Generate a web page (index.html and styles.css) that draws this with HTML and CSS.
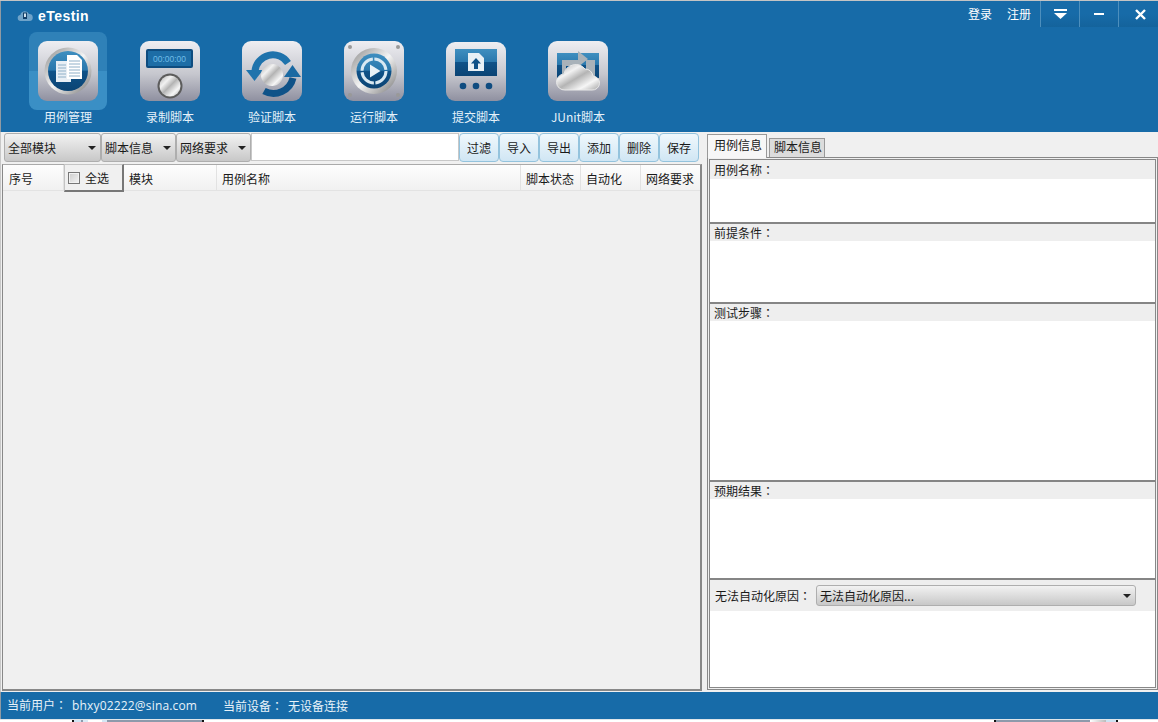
FILE: index.html
```html
<!DOCTYPE html>
<html lang="zh-CN">
<head>
<meta charset="utf-8">
<title>eTestin</title>
<link rel="stylesheet" href="styles.css">
</head>
<body>
<svg class="defs" width="0" height="0" aria-hidden="true">
  <defs>
    <linearGradient id="tile" x1="0" y1="0" x2="0" y2="1">
      <stop offset="0" stop-color="#eeeef2"/><stop offset=".55" stop-color="#c6c7ce"/><stop offset="1" stop-color="#8f90a0"/>
    </linearGradient>
    <linearGradient id="ring" x1="0" y1="0" x2="1" y2="1">
      <stop offset="0" stop-color="#8d8d8d"/><stop offset=".5" stop-color="#f4f4f4"/><stop offset="1" stop-color="#777"/>
    </linearGradient>
    <linearGradient id="blue" x1="0" y1="0" x2="0" y2="1">
      <stop offset="0" stop-color="#3f8fc0"/><stop offset=".48" stop-color="#2a78ad"/><stop offset=".5" stop-color="#0f5288"/><stop offset="1" stop-color="#0b4474"/>
    </linearGradient>
    <linearGradient id="metal" x1="0" y1="0" x2="1" y2="1">
      <stop offset="0" stop-color="#a8a8a8"/><stop offset=".3" stop-color="#f2f2f2"/><stop offset=".5" stop-color="#b4b4b4"/><stop offset=".75" stop-color="#f6f6f6"/><stop offset="1" stop-color="#a4a4a4"/>
    </linearGradient>
  </defs>
</svg>
<div class="app">
  <header class="top">
    <div class="titlebar">
      <div class="brand">
        <svg class="logo" width="16" height="12" viewBox="0 0 16 12"><path d="M4 11a3 3 0 0 1-.6-6A4.500 4.500 0 0 1 12 4a3.500 3.500 0 0 1 .5 7z" fill="#6fa3c9"/><rect x="6" y="2.500" width="4" height="6.500" fill="#123f68"/><rect x="7" y="3.500" width="2" height="3.500" fill="#cfe2ef"/></svg>
        <span class="brand-name">eTestin</span>
      </div>
      <div class="winbar">
        <span class="link">登录</span>
        <span class="link">注册</span>
        <span class="winbtn first"><svg width="13" height="10" viewBox="0 0 13 10"><rect width="13" height="2" fill="#fff"/><path d="M0 4h13L6.500 10z" fill="#fff"/></svg></span>
        <span class="winbtn"><svg width="10" height="2" viewBox="0 0 10 2"><rect width="10" height="2" fill="#fff"/></svg></span>
        <span class="winbtn last"><svg width="11" height="11" viewBox="0 0 11 11"><path d="M1 1l9 9M10 1l-9 9" stroke="#fff" stroke-width="2.400"/></svg></span>
      </div>
    </div>
    <nav class="nav">
      <div class="nav-item active">
        <svg class="tile" viewBox="0 0 60 60"><rect width="60" height="60" rx="9" fill="url(#tile)"/><circle cx="30" cy="30" r="23.500" fill="url(#ring)"/><circle cx="30" cy="30" r="20" fill="url(#blue)"/><path d="M18 20h15v21H18z" fill="#e8eff5"/><path d="M20 24h8M20 27h8M20 30h8M20 33h8M20 36h8" stroke="#8fb0c8"/><path d="M29 14h10l5 5v19H29z" fill="#fff"/><path d="M31 20h11M31 23h11M31 26h11M31 29h11M31 32h11M31 35h11" stroke="#8fb0c8"/></svg>
        <span>用例管理</span>
      </div>
      <div class="nav-item">
        <svg class="tile" viewBox="0 0 60 60"><rect width="60" height="60" rx="9" fill="url(#tile)"/><rect x="6" y="8" width="47" height="19" rx="2" fill="#0e4c7f"/><rect x="8" y="10" width="43" height="15" fill="#1d6da6"/><text x="13" y="21" class="clock" textLength="33" lengthAdjust="spacingAndGlyphs">00:00:00</text><circle cx="30" cy="45" r="12.500" fill="#5c5c5c"/><circle cx="30" cy="45" r="10.500" fill="url(#metal)"/></svg>
        <span>录制脚本</span>
      </div>
      <div class="nav-item">
        <svg class="tile" viewBox="0 0 60 60"><rect width="60" height="60" rx="9" fill="url(#tile)"/><path d="M13 30A18 18 0 0 1 46 22" fill="none" stroke="#1f73ac" stroke-width="7"/><path d="M4 29h17l-8.500 11z" fill="#1f73ac"/><path d="M51 37A20 20 0 0 1 22 50" fill="none" stroke="#0f5288" stroke-width="7"/><path d="M42 36h17l-8.500-12z" fill="#1a69a2"/><circle cx="30" cy="34" r="11" fill="url(#metal)"/></svg>
        <span>验证脚本</span>
      </div>
      <div class="nav-item">
        <svg class="tile" viewBox="0 0 60 60"><rect width="60" height="60" rx="9" fill="url(#tile)"/><circle cx="6" cy="6" r="2" fill="#999"/><circle cx="54" cy="6" r="2" fill="#999"/><circle cx="6" cy="54" r="2" fill="#999"/><circle cx="54" cy="54" r="2" fill="#999"/><circle cx="30" cy="30" r="23" fill="url(#ring)"/><circle cx="30" cy="30" r="17.500" fill="url(#blue)"/><circle cx="30" cy="30" r="12" fill="none" stroke="#d8e8f2" stroke-width="3" stroke-dasharray="17.300 1.550"/><path d="M26 23.500l10.500 6.500-10.500 6.500z" fill="#e8f1f7"/></svg>
        <span>运行脚本</span>
      </div>
      <div class="nav-item">
        <svg class="tile" viewBox="0 0 60 60"><rect y="1" width="60" height="59" rx="9" fill="url(#tile)"/><rect x="9" y="8" width="42" height="27" fill="url(#blue)"/><path d="M22 12h11l5 5v13H22z" fill="#e8f0f5"/><path d="M30 17l5 5.500h-3V28h-4v-5.500h-3z" fill="#0f5288"/><circle cx="17" cy="45" r="3.300" fill="#0f4c80"/><circle cx="30" cy="45" r="3.300" fill="#0f4c80"/><circle cx="43" cy="45" r="3.300" fill="#0f4c80"/></svg>
        <span>提交脚本</span>
      </div>
      <div class="nav-item">
        <svg class="tile" viewBox="0 0 60 60"><rect width="60" height="60" rx="9" fill="url(#tile)"/><rect x="9" y="12" width="42" height="25" fill="url(#blue)"/><path d="M14 19h16v-9l10 8-10 8v-1H18v8h-4zM38 19h9v18h-9z" fill="#a9b2b9"/><path d="M17 49a8 8 0 0 1-1-16 12 12 0 0 1 21-5 8 8 0 0 1 8 7 7 7 0 0 1-1 14z" fill="url(#metal)" stroke="#e8e8e8"/></svg>
        <span>JUnit脚本</span>
      </div>
    </nav>
  </header>
  <main class="main">
    <section class="left">
      <div class="toolbar">
        <div class="combo w97"><span>全部模块</span><i class="caret"></i></div>
        <div class="combo w75"><span>脚本信息</span><i class="caret"></i></div>
        <div class="combo w75"><span>网络要求</span><i class="caret"></i></div>
        <div class="search"></div>
        <button class="btn">过滤</button>
        <button class="btn">导入</button>
        <button class="btn">导出</button>
        <button class="btn">添加</button>
        <button class="btn">删除</button>
        <button class="btn">保存</button>
      </div>
      <div class="table">
        <div class="thead">
          <div class="th c-no">序号</div>
          <div class="th c-all"><i class="check"></i>全选</div>
          <div class="th c-mod">模块</div>
          <div class="th c-name">用例名称</div>
          <div class="th c-state">脚本状态</div>
          <div class="th c-auto">自动化</div>
          <div class="th c-net">网络要求</div>
        </div>
      </div>
    </section>
    <aside class="right">
      <div class="tabs">
        <div class="tab on">用例信息</div>
        <div class="tab">脚本信息</div>
      </div>
      <div class="panel">
        <div class="inner">
          <div class="field h-name"><div class="label">用例名称<b class="colon" lang="zh-TW">：</b></div></div>
          <div class="field h-pre"><div class="label">前提条件<b class="colon" lang="zh-TW">：</b></div></div>
          <div class="field h-steps"><div class="label">测试步骤<b class="colon" lang="zh-TW">：</b></div></div>
          <div class="field h-result"><div class="label">预期结果<b class="colon" lang="zh-TW">：</b></div></div>
          <div class="field h-reason">
            <div class="reason-row">
              <span>无法自动化原因<b class="colon" lang="zh-TW">：</b></span>
              <div class="combo reason"><span>无法自动化原因...</span><i class="caret"></i></div>
            </div>
          </div>
        </div>
      </div>
    </aside>
  </main>
  <footer class="status">
    <span class="st-user">当前用户<b class="colon" lang="zh-TW">：</b><span class="mail">bhxy02222@sina.com</span></span>
    <span>当前设备<b class="colon" lang="zh-TW">：</b><span class="device">无设备连接</span></span>
  </footer>
  <div class="desk">
    <div class="frag frag-a"><i class="tick"></i><i class="lb8"></i><i class="g2"></i><i class="lb4"></i><i class="w14"></i><i class="lb5"></i><i class="bar"></i><i class="tick"></i></div>
    <div class="frag frag-b"><i class="tick"></i><i class="bar"></i><i class="shine"></i><i class="lb10"></i><i class="tick"></i></div>
  </div>
</div>
</body>
</html>
```
FILE: styles.css
```css
* { box-sizing: border-box; }
html, body { margin: 0; padding: 0; background: #fff; }
body { width: 1158px; height: 722px; overflow: hidden; font: 12px/16px "Noto Sans CJK SC", "Liberation Sans", sans-serif; color: #1a1a1a; }
.defs { position: absolute; }
.colon { font-family: "Noto Sans CJK TC", sans-serif; font-weight: 400; }
.app { display: flex; flex-direction: column; height: 722px; border-top: 1px solid #c4c4c4; }

.top { height: 131px; flex: none; background: #176ba8; border-left: 1px solid #8f9aa3; display: flex; flex-direction: column; }
.titlebar { height: 31px; flex: none; display: flex; justify-content: space-between; align-items: flex-start; }
.brand { display: flex; align-items: center; gap: 5px; padding: 7px 0 0 16px; }
.brand-name { font: bold 14px/16px "Liberation Sans", sans-serif; letter-spacing: .45px; color: #fff; }
.winbar { display: flex; align-items: flex-start; }
.link { color: #fff; margin-right: 15px; line-height: 26px; }
.winbtn { width: 39px; height: 26px; display: flex; align-items: center; justify-content: center; border-left: 1px solid #4d8fbd; background: linear-gradient(#176ba8 50%, #14639c); }
.winbtn.first { margin-left: -8px; }
.winbtn.last { width: 40px; padding-left: 4px; }
.link + .link { margin-right: 17px; }

.nav { display: flex; padding-left: 16px; }
.nav-item { width: 102px; height: 100px; padding-top: 9px; display: flex; flex-direction: column; align-items: center; color: #e6f2fa; position: relative; }
.nav-item span { margin-top: 8px; white-space: nowrap; position: relative; }
.tile { width: 60px; height: 60px; flex: none; display: block; position: relative; }
.nav-item.active::before { content: ""; position: absolute; left: 12px; top: 0; width: 78px; height: 78px; border-radius: 8px; background: linear-gradient(#2f81b8 0 50%, #3a8fc5 50%); }
.clock { font: 9px "Liberation Sans", sans-serif; fill: #6fbce6; }

.main { flex: 1; display: flex; background: #f0f0f0; min-height: 0; }
.left { width: 704px; flex: none; padding: 1px 2px 1px 1px; display: flex; flex-direction: column; border-left: 1px solid #c8c8c8; }
.toolbar { height: 30px; display: flex; padding-left: 2px; flex: none; }
.combo { height: 29px; display: flex; align-items: center; justify-content: space-between; padding: 0 4px 0 3px; border: 1px solid #aeaeae; border-radius: 3px; background: linear-gradient(#f2f2f2, #c8c8c8); color: #1a1a1a; }
.w97 { width: 97px; }
.w75 { width: 75px; }
.caret { width: 0; height: 0; border: 4px solid transparent; border-top: 4px solid #222; border-bottom: 0; flex: none; }
.search { width: 208px; height: 28px; background: #fff; border: 1px solid #c8c8c8; }
.btn { width: 40px; height: 29px; padding: 0; border: 1px solid #94c3dd; border-radius: 4px; background: linear-gradient(#f0f8fc, #d0e6f4); font: inherit; color: #1a1a1a; }

.table { flex: 1; margin-top: 1px; border: 2px solid #888; border-top: 1px solid #aaa; border-left-width: 1px; display: flex; flex-direction: column; }
.thead { height: 26px; display: flex; background: linear-gradient(#fdfdfd, #f1f1f1); border-bottom: 1px solid #e3e3e3; }
.th { height: 25px; padding-left: 5px; line-height: 28px; border-right: 1px solid #e2e2e2; flex: none; white-space: nowrap; }
.c-no { width: 61px; padding-left: 6px; }
.c-all { width: 60px; height: 28px; margin-top: -1px; padding-left: 3px; background: #f0f0f0; border: 1px solid #c4c4c4; border-right: 2px solid #777; border-bottom: 2px solid #777; display: flex; align-items: center; gap: 5px; }
.check { width: 12px; height: 12px; border: 1px solid #777; background: linear-gradient(135deg, #ccc, #f4f4f4); box-shadow: inset 0 0 0 1px #f2f2f2; }
.c-mod { width: 93px; }
.c-name { width: 304px; }
.c-state { width: 60px; }
.c-auto { width: 60px; }
.c-net { width: 60px; border-right: 0; }

.right { flex: 1; padding: 1px 0 2px 3px; display: flex; flex-direction: column; background: #f0f0f0; }
.tabs { display: flex; height: 24px; align-items: flex-end; flex: none; }
.tab { height: 19px; width: 56px; padding-left: 2px; text-align: center; line-height: 16px; background: #dcdcdc; border: 1px solid #999; border-bottom: 0; margin-left: 2px; }
.tab.on { height: 24px; width: 60px; margin: 0 0 -1px; position: relative; background: #f7f7f7; line-height: 20px; }
.panel { flex: 1; border: 1px solid #888; padding: 1px; display: flex; }
.inner { flex: 1; border: 1px solid #888; background: #fff; display: flex; flex-direction: column; }
.field { flex: none; border-bottom: 2px solid #858585; }
.label { height: 17px; padding-left: 4px; line-height: 17px; background: #eee; }
.h-name { height: 64px; }
.h-name .label { height: 19px; line-height: 20px; }
.h-pre { height: 80px; }
.h-steps { height: 178px; }
.h-result { height: 98px; }
.h-reason { flex: 1; border-bottom: 0; }
.reason-row { height: 31px; padding-left: 5px; display: flex; align-items: center; gap: 5px; background: #eee; }
.reason { width: 320px; height: 21px; }

.status { height: 27px; flex: none; display: flex; align-items: center; background: #176ba8; color: #e8f2f9; padding: 0 0 0 6px; border-left: 1px solid #8f9aa3; }
.st-user { width: 216px; }
.mail { font-family: "Open Sans", sans-serif; margin-left: 5px; letter-spacing: .17px; }
.device { margin-left: 5px; }

.desk { height: 3px; flex: none; border-top: 1px solid #dfe6ea; display: flex; justify-content: space-between; padding: 0 40px 0 72px; background: #fff; }
.frag { display: flex; height: 2px; }
.frag i { display: block; height: 2px; }
.tick { width: 2px; background: #111; }
.lb8 { width: 7px; background: #cfe3f2; }
.g2 { width: 2px; background: #8d9aab; }
.lb4 { width: 5px; background: #dbeaf5; }
.w14 { width: 14px; background: #fff; }
.lb5 { width: 5px; background: #d5e7f4; }
.frag-a .bar { width: 95px; background: #8d9aab; }
.frag-b .bar { width: 94px; background: #8d9aab; }
.shine { width: 16px; background: linear-gradient(90deg, #fff, #bbb); }
.lb10 { width: 10px; background: #cfe3f2; }
```
